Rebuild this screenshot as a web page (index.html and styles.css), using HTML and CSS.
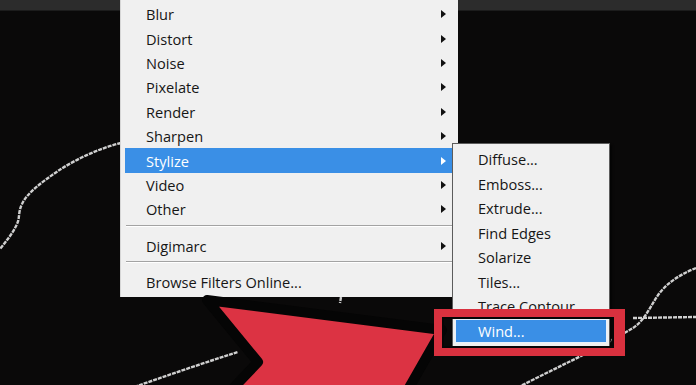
FILE: index.html
```html
<!DOCTYPE html>
<html lang="en">
<head>
  <meta charset="UTF-8">
  <meta name="viewport" content="width=device-width, initial-scale=1.0">
  <title>Filter menu - Stylize</title>
  <link rel="stylesheet" href="styles.css">
</head>
<body>
  <div class="screen">
    <div class="topbar"></div>

    <!-- selection path drawn on the canvas -->
    <svg class="canvas-lines" width="696" height="385" viewBox="0 0 696 385">
      <path d="M121,143 C100,148 76,159 58,171 C42,182 27,193 22,204 C18,212 20,218 17,224 C13,233 7,240 0,249" />
      <path d="M120,392 C160,378 200,364 238,352" />
      <path d="M513,390 C555,368 600,348 633,328 C648,318 652,300 664,288 C674,278 686,272 696,268" />
      <path d="M633,318 L696,317" />
      <path d="M341,297 L340,303" />
    </svg>

    <div class="menu main-menu">
      <div class="item">Blur<span class="caret"></span></div>
      <div class="item">Distort<span class="caret"></span></div>
      <div class="item">Noise<span class="caret"></span></div>
      <div class="item">Pixelate<span class="caret"></span></div>
      <div class="item">Render<span class="caret"></span></div>
      <div class="item">Sharpen<span class="caret"></span></div>
      <div class="item active">Stylize<span class="caret"></span></div>
      <div class="item">Video<span class="caret"></span></div>
      <div class="item">Other<span class="caret"></span></div>
      <div class="sep"></div>
      <div class="item">Digimarc<span class="caret"></span></div>
      <div class="sep"></div>
      <div class="item">Browse Filters Online...</div>
    </div>

    <div class="menu sub-menu">
      <div class="item">Diffuse...</div>
      <div class="item">Emboss...</div>
      <div class="item">Extrude...</div>
      <div class="item">Find Edges</div>
      <div class="item">Solarize</div>
      <div class="item">Tiles...</div>
      <div class="item">Trace Contour...</div>
      <div class="item active">Wind...</div>
    </div>

    <svg class="pointer" width="696" height="385" viewBox="0 0 696 385">
      <path d="M207,300 L442,330 L402,400 L222,400 L258,362 Z" />
    </svg>

    <div class="callout"></div>
  </div>
</body>
</html>
```

FILE: styles.css
```css
body {
  margin: 0;
  background: #0a0a0a;
  font-family: "Open Sans", "Noto Sans", Arial, sans-serif;
}
.screen {
  position: relative;
  width: 696px;
  height: 385px;
  overflow: hidden;
  background: #0a0909;
}
.topbar {
  height: 10px;
  background: #2c2c2c;
  border-bottom: 1px solid #1c1c1c;
}
.canvas-lines {
  position: absolute;
  left: 0;
  top: 0;
}
.canvas-lines path {
  fill: none;
  stroke: #cfcfcf;
  stroke-width: 2.4;
  stroke-dasharray: 4 1;
}

.menu {
  position: absolute;
  box-sizing: border-box;
  background: #f0f0f0;
  color: #161616;
  font-size: 14.6px;
}
.menu .item {
  display: flex;
  align-items: center;
  justify-content: space-between;
  box-sizing: border-box;
}
.menu .item.active {
  background: #3a8fe6;
  color: #fff;
}

.main-menu {
  left: 120px;
  top: 0;
  width: 338px;
  height: 297px;
  padding: 2px 4px 2px 4px;
  border-left: 1px solid #d6d6d6;
}
.main-menu .item {
  height: 24.4px;
  padding: 0 8px 0 21px;
}
.caret {
  width: 0;
  height: 0;
  border-top: 4.5px solid transparent;
  border-bottom: 4.5px solid transparent;
  border-left: 5px solid #111;
}
.item.active .caret {
  border-left-color: #fff;
}
.sep {
  height: 1px;
  background: #a3a3a3;
  border-bottom: 1px solid #fff;
  margin: 3px 0 7px 1px;
}

.sub-menu {
  left: 452px;
  top: 143px;
  width: 158px;
  padding: 3px 2px;
  border: 1px solid #5c5c5c;
  box-shadow: 2px 2px 2px rgba(0, 0, 0, 0.6);
}
.sub-menu .item {
  height: 24.5px;
  padding-left: 23px;
}
.sub-menu .item.active {
  border: 1px solid #e8f1fb;
  padding-left: 22px;
}

.pointer {
  position: absolute;
  left: 0;
  top: 0;
}
.pointer path {
  fill: #dc3343;
  stroke: #050505;
  stroke-width: 10;
  stroke-linejoin: round;
}

.callout {
  position: absolute;
  left: 434px;
  top: 309px;
  width: 191px;
  height: 47px;
  box-sizing: border-box;
  border: 8px solid #d9313f;
  border-right-width: 11px;
  box-shadow: inset 0 0 0 2px #060606;
}
```
